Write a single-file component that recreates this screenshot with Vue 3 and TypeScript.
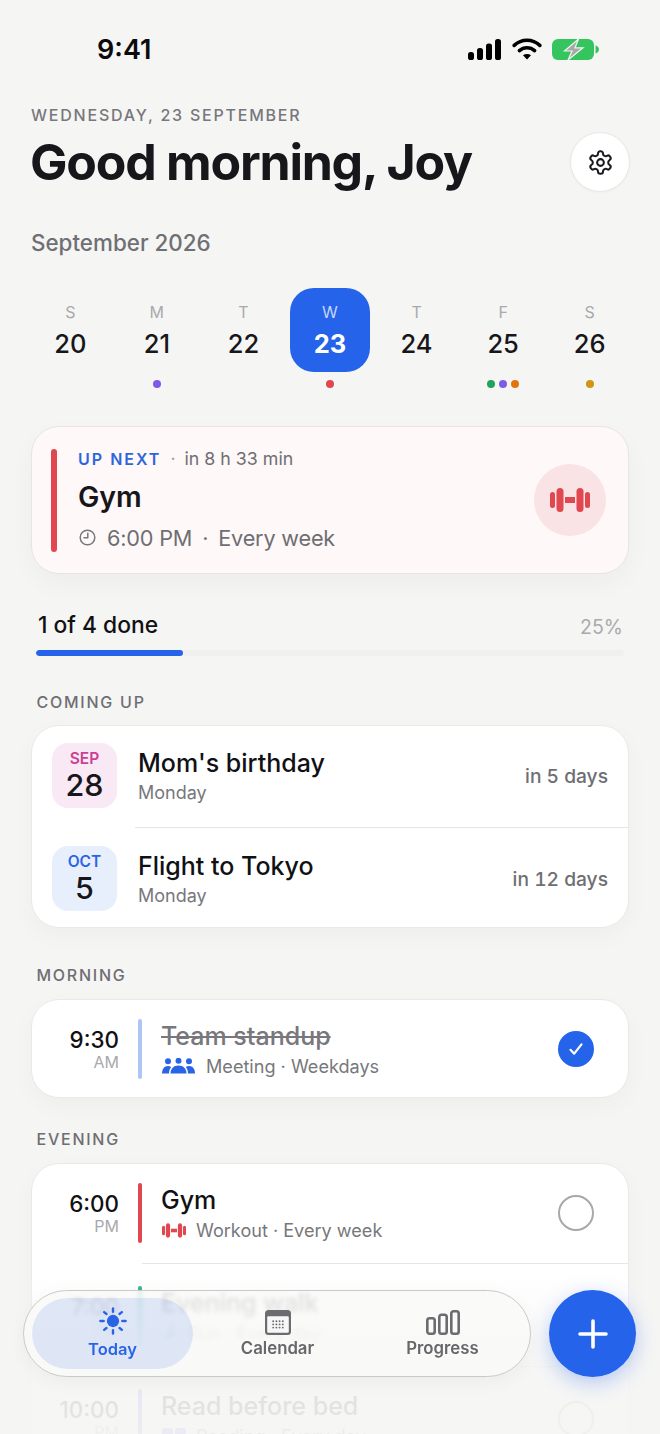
<script setup lang="ts">
interface Day { l: string; n: number; dots: string[]; on?: boolean }
const days: Day[] = [
  { l: 'S', n: 20, dots: [] },
  { l: 'M', n: 21, dots: ['#7c5ce6'] },
  { l: 'T', n: 22, dots: [] },
  { l: 'W', n: 23, dots: ['#e0474f'], on: true },
  { l: 'T', n: 24, dots: [] },
  { l: 'F', n: 25, dots: ['#1fa45c', '#7c5ce6', '#e27510'] },
  { l: 'S', n: 26, dots: ['#cf9612'] },
]
const events = [
  { mon: 'SEP', day: 28, title: "Mom's birthday", sub: 'Monday', right: 'in 5 days', tone: 'pink' },
  { mon: 'OCT', day: 5, title: 'Flight to Tokyo', sub: 'Monday', right: 'in 12 days', tone: 'blue' },
]
interface Task { time: string; ap: string; title: string; sub: string; color: string; icon: string; done?: boolean }
const morning: Task[] = [
  { time: '9:30', ap: 'AM', title: 'Team standup', sub: 'Meeting · Weekdays', color: '#aec6f5', icon: 'people', done: true },
]
const evening: Task[] = [
  { time: '6:00', ap: 'PM', title: 'Gym', sub: 'Workout · Every week', color: '#e0474f', icon: 'gym' },
  { time: '7:00', ap: 'PM', title: 'Evening walk', sub: 'Run · Every day', color: '#1fa584', icon: 'run' },
  { time: '10:00', ap: 'PM', title: 'Read before bed', sub: 'Reading · Every day', color: '#7c5ce6', icon: 'book' },
]
const groups = [
  { label: 'MORNING', cls: 'sec-morning', items: morning },
  { label: 'EVENING', cls: 'sec-evening', items: evening },
]
const calDots: number[][] = []
for (let r = 0; r < 3; r++) for (let c = 0; c < 4; c++) calDots.push([8.2 + c * 3.2, 11.2 + r * 3.2])
</script>

<template>
  <div class="phone">
    <div class="status">
      <span class="clock">9:41</span>
      <div class="status-icons">
        <svg width="33" height="21" viewBox="0 0 33 21"><rect x="0" y="13" width="6" height="8" rx="2.6"/><rect x="9" y="9" width="6" height="12" rx="2.6"/><rect x="18" y="4.5" width="6" height="16.500" rx="2.6"/><rect x="27" y="0" width="6" height="21" rx="2.6"/></svg>
        <svg width="30" height="22" viewBox="0 0 30 22" fill="none" stroke="#000" stroke-width="3.600" stroke-linecap="round"><path d="M2.200 7.400C9.500 .6 20.500 .6 27.800 7.400"/><path d="M7.400 12.600c4.400-3.900 10.800-3.900 15.200 0"/><path d="M15 21.500l-4-4.300c2.300-1.700 5.700-1.700 8 0z" fill="#000" stroke="none"/></svg>
        <svg class="batt" width="47" height="21" viewBox="0 0 47 21"><rect x="0" y="0" width="42" height="21" rx="6" fill="#36c45f"/><path d="M43.500 6.500c2 .4 3.500 2 3.500 4s-1.500 3.600-3.500 4z" fill="#36c45f"/><path d="M26.500 0L12.500 12h7.500l-4 9L31 8.800h-8z" fill="#a5aaa6" stroke="#f0f5f1" stroke-width="1.200"/></svg>
      </div>
    </div>

    <main class="content">
      <div class="eyebrow">WEDNESDAY, 23 SEPTEMBER</div>
      <div class="title-row">
        <h1>Good morning, Joy</h1>
        <div class="gear">
          <svg width="27" height="27" viewBox="0 0 24 24" fill="none" stroke="#1a1a1e" stroke-width="1.800" stroke-linecap="round" stroke-linejoin="round"><path d="M12.220 2h-.44a2 2 0 0 0-2 2v.18a2 2 0 0 1-1 1.730l-.43.25a2 2 0 0 1-2 0l-.15-.08a2 2 0 0 0-2.730.73l-.22.38a2 2 0 0 0 .73 2.730l.15.1a2 2 0 0 1 1 1.720v.51a2 2 0 0 1-1 1.740l-.15.09a2 2 0 0 0-.73 2.730l.22.38a2 2 0 0 0 2.730.73l.15-.08a2 2 0 0 1 2 0l.43.25a2 2 0 0 1 1 1.730V20a2 2 0 0 0 2 2h.44a2 2 0 0 0 2-2v-.18a2 2 0 0 1 1-1.730l.43-.25a2 2 0 0 1 2 0l.15.08a2 2 0 0 0 2.730-.73l.22-.39a2 2 0 0 0-.73-2.730l-.15-.08a2 2 0 0 1-1-1.740v-.5a2 2 0 0 1 1-1.740l.15-.09a2 2 0 0 0 .73-2.730l-.22-.38a2 2 0 0 0-2.730-.73l-.15.08a2 2 0 0 1-2 0l-.43-.25a2 2 0 0 1-1-1.730V4a2 2 0 0 0-2-2z"/><circle cx="12" cy="12" r="3"/></svg>
        </div>
      </div>
      <div class="month">September 2026</div>

      <div class="week">
        <div v-for="d in days" :key="d.n" class="day">
          <div class="day-box" :class="{ on: d.on }">
            <span class="day-l">{{ d.l }}</span>
            <span class="day-n">{{ d.n }}</span>
          </div>
          <div class="dots"><i v-for="c in d.dots" :key="c" :style="{ background: c }"></i></div>
        </div>
      </div>

      <section class="next">
        <div class="next-bar"></div>
        <div class="next-main">
          <div class="next-top"><b>UP NEXT</b><span class="dot">·</span><span>in 8 h 33 min</span></div>
          <div class="next-title">Gym</div>
          <div class="next-sub">
            <svg width="17" height="17" viewBox="0 0 17 17" fill="none" stroke="#77777c" stroke-width="1.500" stroke-linecap="round" stroke-linejoin="round"><circle cx="8.500" cy="8.500" r="7.300"/><path d="M8.800 4.300v4.500H5"/></svg>
            <span>6:00 PM</span><span class="dot2">·</span><span>Every week</span>
          </div>
        </div>
        <div class="next-icon">
          <svg width="40" height="24" viewBox="0 0 40 24" fill="#e0474f"><rect x="0" y="4" width="5" height="16" rx="2.500"/><rect x="6.500" y="0" width="7" height="24" rx="3.500"/><rect x="15" y="9" width="10" height="6"/><rect x="26.500" y="0" width="7" height="24" rx="3.500"/><rect x="35" y="4" width="5" height="16" rx="2.500"/></svg>
        </div>
      </section>

      <div class="prog-head"><span>1 of 4 done</span><em>25%</em></div>
      <div class="prog"><div class="prog-fill" :style="{ width: '25%' }"></div></div>

      <div class="label sec-coming">COMING UP</div>
      <section class="card">
        <div v-for="e in events" :key="e.title" class="event">
          <div class="badge" :class="e.tone"><span class="b-mon">{{ e.mon }}</span><span class="b-day">{{ e.day }}</span></div>
          <div class="ev-main">
            <div class="ev-title">{{ e.title }}</div>
            <div class="ev-sub">{{ e.sub }}</div>
          </div>
          <div class="ev-right">{{ e.right }}</div>
        </div>
      </section>

      <template v-for="g in groups" :key="g.label">
        <div class="label" :class="g.cls">{{ g.label }}</div>
        <section class="card">
          <div v-for="t in g.items" :key="t.title" class="task">
            <div class="t-time"><span class="t-h">{{ t.time }}</span><span class="t-ap">{{ t.ap }}</span></div>
            <div class="t-bar" :style="{ background: t.color }"></div>
            <div class="t-main">
              <div class="t-title" :class="{ done: t.done }">{{ t.title }}</div>
              <div class="t-sub">
                <svg v-if="t.icon === 'people'" class="sub-people" width="33" height="16" viewBox="0 0 33 16" fill="#2a64e6"><circle cx="6" cy="3.300" r="3"/><circle cx="16.500" cy="2.800" r="3"/><circle cx="27" cy="3.300" r="3"/><path d="M0 15.500c0-4 2-7.500 6-7.500 1.300 0 2.300.3 3.200 1-1.500 1.700-2.200 4-2.200 6.500z"/><path d="M8.500 15.500c0-4.500 3-8 8-8s8 3.500 8 8z"/><path d="M33 15.500c0-4-2-7.500-6-7.500-1.300 0-2.300.3-3.200 1 1.500 1.700 2.200 4 2.200 6.500z"/></svg>
                <svg v-else-if="t.icon === 'gym'" width="24" height="15" viewBox="0 0 40 24" fill="#e0474f"><rect x="0" y="4" width="5" height="16" rx="2.500"/><rect x="6.500" y="0" width="7" height="24" rx="3.500"/><rect x="15" y="9" width="10" height="6"/><rect x="26.500" y="0" width="7" height="24" rx="3.500"/><rect x="35" y="4" width="5" height="16" rx="2.500"/></svg>
                <svg v-else-if="t.icon === 'run'" width="16" height="16" viewBox="0 0 16 16" fill="none" stroke="#1fa584" stroke-width="2" stroke-linecap="round" stroke-linejoin="round"><circle cx="10" cy="2.500" r="1.200"/><path d="M3 15l3-4 3 1V7L5 8M9 7l2 3h3"/></svg>
                <svg v-else width="24" height="16" viewBox="0 0 24 16" fill="#7c5ce6"><rect x="0" y="0" width="11" height="16" rx="3"/><rect x="13" y="0" width="11" height="16" rx="3"/></svg>
                <span>{{ t.sub }}</span>
              </div>
            </div>
            <div class="check" :class="{ checked: t.done }">
              <svg v-if="t.done" width="18" height="18" viewBox="0 0 18 18" fill="none" stroke="#fff" stroke-width="2.200" stroke-linecap="round" stroke-linejoin="round"><path d="M3.500 9.800l3.700 3.900L14.500 4.300"/></svg>
            </div>
          </div>
        </section>
      </template>
    </main>

    <div class="fade"></div>

    <nav class="tabs">
      <div class="tab active">
        <svg width="28" height="28" viewBox="0 0 30 30" fill="#2a64e6" stroke="#2a64e6" stroke-width="2.600" stroke-linecap="round"><circle cx="15" cy="15" r="6.600" stroke="none"/><path d="M15 1.500v3.500M15 25v3.500M1.500 15H5M25 15h3.500M5.500 5.500l2.500 2M22 22.500l2.500 2M24.500 5.500l-2.500 2M8 22.500l-2.500 2"/></svg>
        <span>Today</span>
      </div>
      <div class="tab">
        <svg width="26" height="25" viewBox="0 0 26 25"><rect x="0" y="0" width="26" height="25" rx="3.500" fill="#6b6b70"/><rect x="2.200" y="6.200" width="21.600" height="16.600" rx="1.200" fill="#f7f7f7"/><circle v-for="p in calDots" :key="p[0] + '-' + p[1]" :cx="p[0]" :cy="p[1]" r=".95" fill="#6b6b70"/></svg>
        <span>Calendar</span>
      </div>
      <div class="tab">
        <svg width="34" height="25" viewBox="0 0 34 25" fill="none" stroke="#6b6b70" stroke-width="2.600"><rect x="1.300" y="8.300" width="7.400" height="15.400" rx="2.200"/><rect x="13.300" y="4.800" width="7.400" height="18.900" rx="2.200"/><rect x="25.300" y="1.300" width="7.400" height="22.400" rx="2.200"/></svg>
        <span>Progress</span>
      </div>
    </nav>

    <button class="fab" aria-label="Add">
      <svg width="30" height="30" viewBox="0 0 30 30" stroke="#fff" stroke-width="3.600" stroke-linecap="round"><path d="M15 2v26M2 15h26"/></svg>
    </button>
  </div>
</template>

<style scoped>
.phone { position: relative; width: 660px; height: 1434px; overflow: hidden; background: #f5f5f4; font-family: Inter, "Liberation Sans", sans-serif; color: #17171b; }
.status { height: 98px; display: flex; align-items: center; justify-content: space-between; padding: 0 61px 0 97px; }
.clock { font-size: 27px; font-weight: 600; color: #0b0b0d; }
.status-icons { display: flex; align-items: center; gap: 11px; padding-left: 1px; }
.batt { margin-left: -1px; }
.content { padding: 0 31px; }
.eyebrow { margin-top: 7px; line-height: 20px; font-size: 16px; font-weight: 500; letter-spacing: 1.78px; color: #77777c; }
.title-row { margin-top: 7px; height: 60px; display: flex; align-items: center; justify-content: space-between; }
h1 { margin: 0 0 0 -1px; font-size: 50px; line-height: 60px; font-weight: 700; letter-spacing: -1.22px; color: #17171b; }
.gear { width: 60px; height: 60px; margin-right: -1px; box-sizing: border-box; border-radius: 50%; background: #fff; border: 1px solid #e7e7e6; display: flex; align-items: center; justify-content: center; box-shadow: 0 1px 3px rgba(0,0,0,.03); }
.month { margin-top: 37px; line-height: 28px; font-size: 22.400px; font-weight: 500; color: #6f6f74; }
.week { margin: 31px -4px 0; display: grid; grid-template-columns: repeat(7, 1fr); }
.day { display: flex; flex-direction: column; align-items: center; }
.day-box { width: 80px; height: 84px; border-radius: 24px; display: flex; flex-direction: column; align-items: center; }
.day-box.on { background: #2563eb; }
.day-l { margin-top: 14px; line-height: 20px; font-size: 16px; font-weight: 400; color: #a9a9ad; }
.day-n { margin-top: 6px; line-height: 32px; font-size: 25.500px; font-weight: 500; color: #17171b; }
.on .day-l { color: #c5d6fa; }
.on .day-n { color: #fff; font-weight: 700; }
.dots { height: 8px; margin-top: 8px; display: flex; gap: 4px; }
.dots i { width: 8px; height: 8px; border-radius: 50%; }
.next { margin-top: 38px; height: 148px; box-sizing: border-box; border: 1px solid #ebe3e3; border-radius: 28px; background: #fef8f8; display: flex; align-items: center; padding: 0 22px 0 19px; box-shadow: 0 10px 26px rgba(0,0,0,.035); }
.next-bar { width: 6px; height: 103px; border-radius: 3px; background: #e0474f; }
.next-main { flex: 1; margin-left: 21px; }
.next-top { display: flex; align-items: center; line-height: 26px; font-size: 17.800px; color: #6e6e73; font-weight: 400; }
.next-top b { font-size: 16px; font-weight: 600; letter-spacing: 2px; color: #2d65dc; }
.next-top .dot { margin: 0 9px 0 9px; color: #9a9a9e; }
.next-title { margin-top: 7px; line-height: 36px; font-size: 28.500px; font-weight: 600; color: #17171b; }
.next-sub { margin-top: 6.500px; display: flex; align-items: center; line-height: 32px; font-size: 21.700px; letter-spacing: -.2px; color: #6e6e73; }
.next-sub svg { margin: 0 11px 0 1px; }
.dot2 { margin: 0 10px; }
.next-icon { width: 72px; height: 72px; border-radius: 50%; background: #f9e3e4; display: flex; align-items: center; justify-content: center; }
.prog-head { margin-top: 37px; height: 28px; padding: 0 6px 0 7px; display: flex; justify-content: space-between; align-items: center; line-height: 28px; font-size: 22.800px; font-weight: 500; color: #111114; }
.prog-head em { margin-top: 3px; font-style: normal; font-size: 19.500px; font-weight: 400; color: #aaaaae; }
.prog { margin: 11px 5px 0; height: 6px; border-radius: 3px; background: #f0f0ef; overflow: hidden; }
.prog-fill { height: 100%; border-radius: 3px; background: #2563eb; }
.label { padding-left: 5.500px; line-height: 20px; font-size: 16px; font-weight: 500; letter-spacing: 1.75px; color: #6e6e73; margin-bottom: 14px; }
.sec-coming { margin-top: 36px; margin-bottom: 13px; }
.sec-morning { margin-top: 37px; }
.sec-evening { margin-top: 31px; }
.card { background: #fff; border: 1px solid #e9e9e8; border-radius: 28px; box-shadow: 0 8px 24px rgba(0,0,0,.03); overflow: hidden; }
.event { position: relative; height: 102px; display: flex; align-items: center; padding: 0 20px 3px; box-sizing: border-box; }
.event + .event { height: 99px; padding: 2px 20px 0; }
.event + .event::before { content: ""; position: absolute; left: 103px; right: 0; top: -1px; height: 1px; background: #e6e6e6; }
.badge { width: 65px; height: 65px; border-radius: 16px; display: flex; flex-direction: column; align-items: center; justify-content: center; }
.badge.pink { background: #f8e9f4; }
.badge.blue { background: #e8effc; }
.b-mon { line-height: 17px; font-size: 15.500px; font-weight: 600; margin-top: 1px; }
.pink .b-mon { color: #cc3f94; }
.blue .b-mon { color: #2a64e6; }
.b-day { line-height: 34px; margin-top: 1px; font-size: 30.500px; font-weight: 500; color: #17171b; }
.ev-main { flex: 1; margin-left: 21px; }
.ev-title { line-height: 32px; font-size: 25px; font-weight: 500; color: #111114; }
.ev-sub { margin-top: 3px; line-height: 22px; font-size: 18px; color: #77777c; }
.ev-right { font-size: 19.200px; font-weight: 500; font-variant-numeric: tabular-nums; color: #6e6e73; }
.task { position: relative; display: flex; align-items: center; padding: 22px 34px 21px 0; }
.task:first-child { padding-top: 19px; }
.task:last-child { padding-bottom: 18px; }
.task + .task::before { content: ""; position: absolute; left: 110px; right: 0; top: -1px; height: 1px; background: #e6e6e6; }
.t-time { width: 87px; text-align: right; display: flex; flex-direction: column; margin-bottom: 1px; }
.t-h { line-height: 28px; font-size: 22.400px; font-weight: 500; color: #111114; }
.t-ap { margin-top: -2px; line-height: 20px; font-size: 16px; color: #a9a9ad; }
.t-bar { width: 4px; height: 60px; margin-left: 19px; border-radius: 2px; }
.t-main { flex: 1; margin-left: 19px; }
.t-title { line-height: 34px; font-size: 25px; font-weight: 500; color: #111114; }
.t-title.done { color: #77777c; text-decoration: line-through; text-decoration-thickness: 2px; }
.t-sub { display: flex; align-items: center; gap: 10px; line-height: 26px; font-size: 18.100px; color: #77777c; }
.t-sub svg { margin-left: 1px; }
.sub-people { margin-right: 1px; }
.check { width: 36px; height: 36px; box-sizing: border-box; border-radius: 50%; border: 2.500px solid #a8a8a8; display: flex; align-items: center; justify-content: center; }
.check.checked { border: 0; background: #2563eb; }
.fade { position: absolute; left: 0; right: 0; top: 1270px; bottom: 0; background: linear-gradient(to bottom, rgba(245,245,244,0) 0, rgba(245,245,244,.9) 100px, rgba(245,245,244,.93) 100%); pointer-events: none; }
.tabs { position: absolute; left: 23px; top: 1290px; width: 508px; height: 87px; box-sizing: border-box; padding: 7px 8px; border: 1px solid #c9c9c7; border-radius: 44px; background: rgba(249,249,248,.84); -webkit-backdrop-filter: blur(2px); backdrop-filter: blur(2px); display: grid; grid-template-columns: 163px 165px 165px; box-shadow: 0 6px 18px rgba(0,0,0,.04); }
.tab { display: flex; flex-direction: column; align-items: center; justify-content: flex-start; padding-top: 12px; color: #66666b; font-size: 16.800px; font-weight: 600; line-height: 22px; }
.tab span { margin-top: 2px; }
.tab.active { margin-right: 2px; border-radius: 36px; background: rgba(37,99,235,.12); color: #2a64e6; font-size: 16.500px; padding-top: 9px; }
.tab.active span { margin-top: 3px; }
.fab { position: absolute; left: 549px; top: 1290px; width: 87px; height: 87px; padding: 0; border: 0; border-radius: 50%; background: #2563eb; display: flex; align-items: center; justify-content: center; box-shadow: 0 6px 20px rgba(37,99,235,.3); }
</style>
